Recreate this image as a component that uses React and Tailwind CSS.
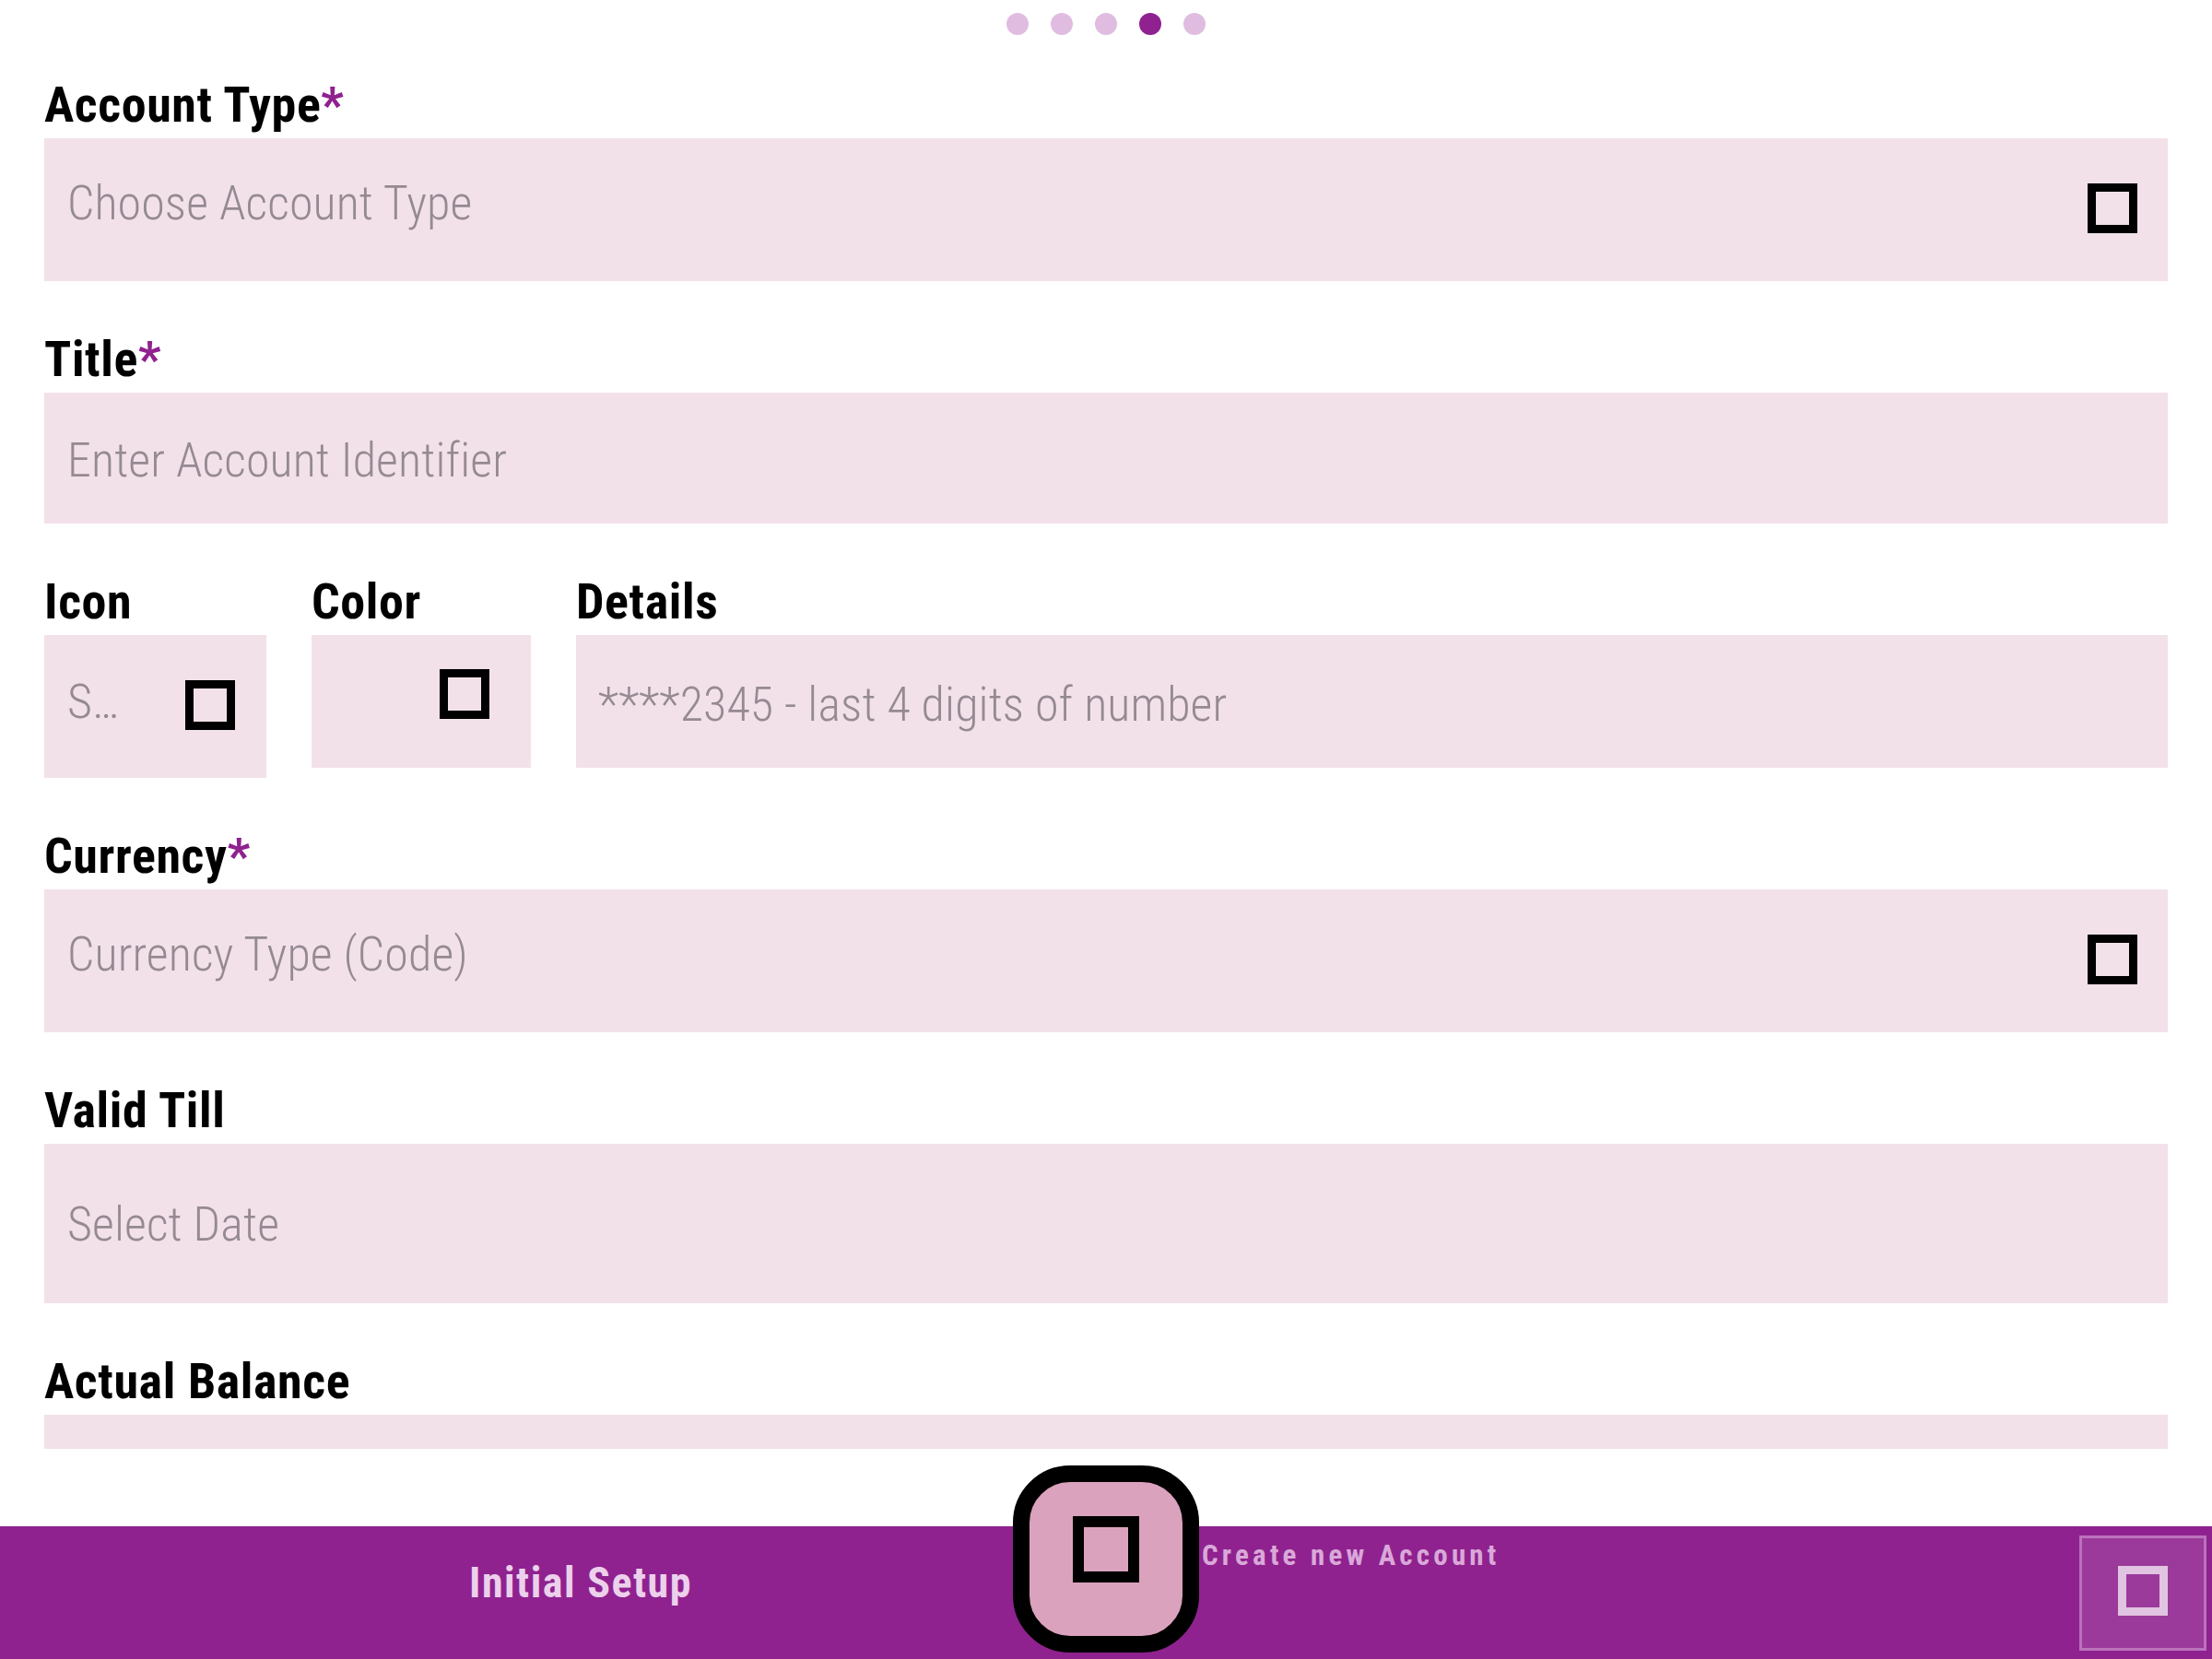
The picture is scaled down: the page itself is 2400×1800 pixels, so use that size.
import React from 'react';

const font = { fontFamily: "'Roboto Condensed', Roboto, 'Liberation Sans', sans-serif" };

// outline square used as icon placeholder everywhere on this screen
const Square = ({ className = '' }) => (
  <div className={`w-[54px] h-[54px] border-[9px] border-black shrink-0 ${className}`}></div>
);

const Label = ({ text, required }) => (
  <div className="h-[64px] leading-[64px] text-[54px] font-bold tracking-[0.6px] text-black [font-stretch:75%] mb-[10px] pt-[6px]">
    {text}
    {required && <span className="text-[#8f228f]">*</span>}
  </div>
);

const Field = ({ label, required, placeholder, height, icon, shift }) => (
  <section className="mb-[47px]">
    <Label text={label} required={required} />
    <div className={`flex items-center justify-between bg-[#f3e1ea] pl-[25px] pr-[33px] ${height}`}>
      <span className={`text-[52px] font-light tracking-[0.1px] text-[#958a92] [font-stretch:75%] ${shift}`}>{placeholder}</span>
      {icon && <Square className="-mt-[4px]" />}
    </div>
  </section>
);

const App = () => {
  return (
    <div className="w-[2400px] h-[1800px] bg-white flex flex-col relative overflow-hidden" style={font}>
      {/* Formulario */}
      <main className="h-[1572px] overflow-hidden px-[48px]">
        {/* Paso actual */}
        <div className="flex justify-center gap-[24px] pt-[14px] h-[76px]">
          <span className="w-[24px] h-[24px] rounded-full bg-[#e0bde0]"></span>
          <span className="w-[24px] h-[24px] rounded-full bg-[#e0bde0]"></span>
          <span className="w-[24px] h-[24px] rounded-full bg-[#e0bde0]"></span>
          <span className="w-[24px] h-[24px] rounded-full bg-[#8f228f]"></span>
          <span className="w-[24px] h-[24px] rounded-full bg-[#e0bde0]"></span>
        </div>

        <Field label="Account Type" required placeholder="Choose Account Type" height="h-[155px]" icon shift="-mt-[14px]" />
        <Field label="Title" required placeholder="Enter Account Identifier" height="h-[142px]" shift="mt-[5px]" />

        {/* Icono, color y detalles */}
        <section className="flex gap-[49px] mb-[47px]">
          <div className="w-[241px] shrink-0">
            <Label text="Icon" />
            <div className="flex items-center justify-between bg-[#f3e1ea] h-[155px] pl-[25px] pr-[34px]">
              <span className="text-[52px] font-light text-[#958a92] [font-stretch:75%] -mt-[10px]">S…</span>
              <Square className="-mt-[4px]" />
            </div>
          </div>
          <div className="w-[238px] shrink-0">
            <Label text="Color" />
            <div className="flex justify-end bg-[#f3e1ea] h-[144px] pr-[45px] pt-[37px]">
              <Square />
            </div>
          </div>
          <div className="flex-1">
            <Label text="Details" />
            <div className="flex items-center bg-[#f3e1ea] h-[144px] pl-[24px]">
              <span className="text-[52px] font-light tracking-[0.1px] text-[#958a92] [font-stretch:75%] mt-[7px]">****2345 - last 4 digits of number</span>
            </div>
          </div>
        </section>

        <Field label="Currency" required placeholder="Currency Type (Code)" height="h-[155px]" icon shift="-mt-[14px]" />
        <Field label="Valid Till" placeholder="Select Date" height="h-[173px]" shift="mt-[2px]" />

        <section>
          <Label text="Actual Balance" />
          <div className="bg-[#f3e1ea] h-[150px]"></div>
        </section>
      </main>

      <div className="flex-1"></div>

      {/* Barra inferior */}
      <nav className="h-[144px] bg-[#8f228f] flex items-center relative">
        <div className="w-[1260px] text-center text-[46px] font-bold tracking-[1.5px] text-[#ecd0ec] [font-stretch:75%] -mt-[22px]">
          Initial Setup
        </div>
        <div className="ml-auto mr-[6px] w-[138px] h-[125px] border-[3px] border-[#bb72bc] bg-[#9b3a9b] flex items-center justify-center">
          <div className="w-[54px] h-[54px] border-[9px] border-[#e1c4e1] -mt-[5px]"></div>
        </div>
      </nav>

      {/* Boton flotante */}
      <button className="absolute left-[1099px] top-[1590px] w-[202px] h-[203px] rounded-[62px] border-[18px] border-black bg-[#dba2bd] flex items-center justify-center">
        <div className="w-[72px] h-[72px] border-[12px] border-black -mt-[22px]"></div>
      </button>
      <span className="absolute left-[1304px] top-[1668px] text-[31px] font-bold tracking-[4.2px] text-[#d9a8d9] [font-stretch:75%] leading-[40px]">
        Create new Account
      </span>
    </div>
  );
};

export default App;
